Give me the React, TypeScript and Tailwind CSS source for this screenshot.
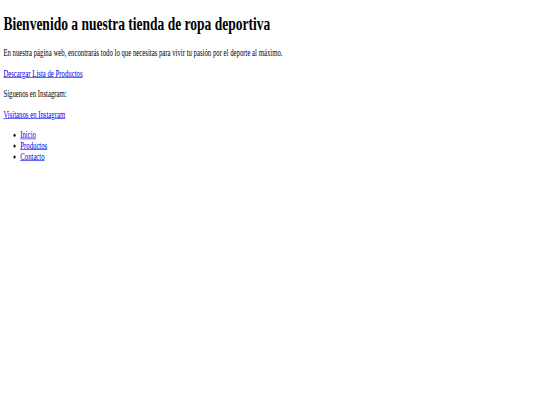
import React from "react";

const navLinks = ["Inicio", "Productos", "Contacto"];

export default function App() {
  return (
    <div className="w-[540px] h-[405px] overflow-hidden bg-white">
      {/* page was captured at 1280x675 and squeezed down to 540x405 */}
      <div
        className="flow-root w-[1280px] h-[675px] origin-top-left scale-x-[0.421875] scale-y-[0.6] px-2 text-black text-[16px] leading-[normal]"
        style={{ fontFamily: '"Liberation Serif", "Times New Roman", serif' }}
      >
        <h1 className="text-[32px] font-bold mt-[21.44px] mb-[21.44px] leading-[normal]">
          Bienvenido a nuestra tienda de ropa deportiva
        </h1>
        <p className="my-4">
          En nuestra página web, encontrarás todo lo que necesitas para vivir tu pasión por el deporte al máximo.
        </p>
        <p className="my-4">
          <a href="#" className="text-[#0000ee] underline">
            Descargar Lista de Productos
          </a>
        </p>
        <p className="my-4">Síguenos en Instagram:</p>
        <p className="my-4">
          <a href="#" className="text-[#0000ee] underline">
            Visítanos en Instagram
          </a>
        </p>
        <ul className="list-disc pl-10 my-4">
          {navLinks.map((label) => (
            <li key={label}>
              <a href="#" className="text-[#0000ee] underline">
                {label}
              </a>
            </li>
          ))}
        </ul>
      </div>
    </div>
  );
}
